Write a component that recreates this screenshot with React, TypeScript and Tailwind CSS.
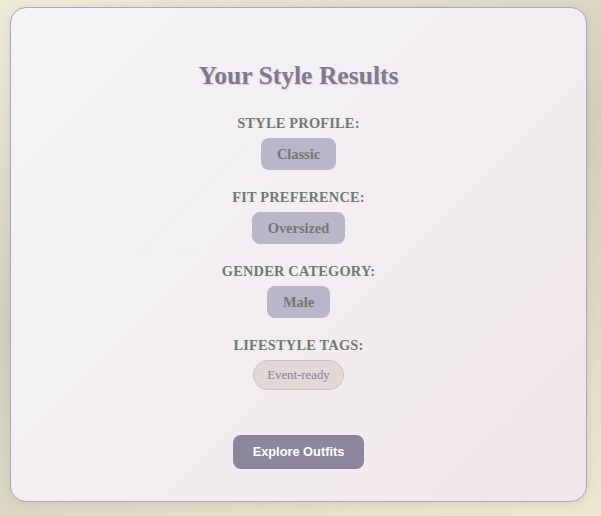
const results = [
  { label: "STYLE PROFILE:", value: "Classic" },
  { label: "FIT PREFERENCE:", value: "Oversized" },
  { label: "GENDER CATEGORY:", value: "Male" },
];

const tags = ["Event-ready"];

const ResultRow = ({ label, value }: { label: string; value: string }) => {
  return (
    <div className="flex flex-col items-center gap-[6px]">
      <h3 className="text-[14.4px] leading-[17px] font-bold tracking-[0.2px] text-[#6d7b72]">
        {label}
      </h3>
      <span className="rounded-lg bg-[#b9b6c9] px-4 py-[7.5px] text-[14.4px] leading-[17px] font-bold text-[#6d7b72]">
        {value}
      </span>
    </div>
  );
};

export default function App() {
  return (
    <div className="min-h-[516px] w-full bg-[linear-gradient(160deg,#efebd9_0%,#d2cdbc_45%,#ddd8c4_70%,#ede8cf_100%)] pt-[7px] pb-[14px] pl-[10px] font-['Liberation_Serif',serif]">
      <div className="flex h-[495px] w-[577px] flex-col items-center rounded-2xl border border-[#a9a5c2] bg-[linear-gradient(135deg,#f4f3f5_0%,#f2eef1_50%,#f1e6ea_100%)] pt-[53px] shadow-[0_2px_8px_rgba(120,110,100,0.15)]">
        <h1 className="text-[25.6px] leading-[30px] font-bold text-[#7d7a93] [text-shadow:1px_1px_1px_rgba(215,180,190,0.6)]">
          Your Style Results
        </h1>
        <div className="mt-[24px] flex flex-col items-center gap-[19px]">
          {results.map((r) => (
            <ResultRow key={r.label} label={r.label} value={r.value} />
          ))}
          <div className="flex flex-col items-center gap-[6px]">
            <h3 className="text-[14.4px] leading-[17px] font-bold tracking-[0.2px] text-[#6d7b72]">
              LIFESTYLE TAGS:
            </h3>
            <div className="flex flex-wrap justify-center gap-2">
              {tags.map((tag) => (
                <span
                  key={tag}
                  className="rounded-full border border-[#d3c0b9] bg-[#e4d8d6] px-[13px] py-[6px] text-[12.8px] leading-[16px] text-[#847f99]"
                >
                  {tag}
                </span>
              ))}
            </div>
          </div>
        </div>
        <button className="mt-[45px] rounded-lg bg-[#8b869b] px-5 py-[10px] font-['Liberation_Sans',Arial,sans-serif] text-[12.8px] leading-[14px] font-bold text-white">
          Explore Outfits
        </button>
      </div>
    </div>
  );
}
